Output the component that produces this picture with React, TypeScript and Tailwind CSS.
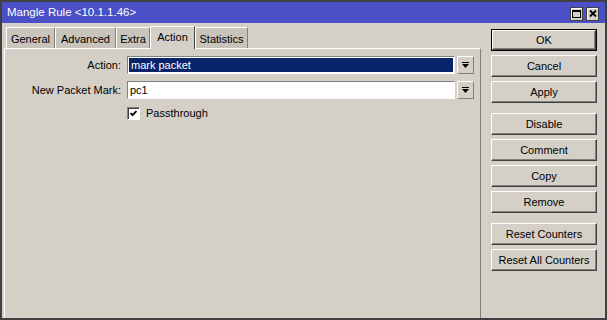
import React from 'react'

const tabs = [
  { label: 'General', w: 'w-[49px]' },
  { label: 'Advanced', w: 'w-[61px]' },
  { label: 'Extra', w: 'w-[34px]' },
  { label: 'Action', w: 'w-[45px]', active: true },
  { label: 'Statistics', w: 'w-[53px]' },
]

function Btn({ label, primary }: { label: string; primary?: boolean }) {
  if (primary) {
    return (
      <div className="w-[106px] h-[22px] border border-black">
        <div className="w-full h-full flex items-center justify-center bg-[#d4d0c8] border-t border-l border-white border-r border-b border-r-[#404040] border-b-[#404040] shadow-[inset_-1px_-1px_0_#808080]">
          {label}
        </div>
      </div>
    )
  }
  return (
    <div className="w-[106px] h-[22px] flex items-center justify-center bg-[#d4d0c8] border-t border-l border-white border-r border-b border-r-[#404040] border-b-[#404040] shadow-[inset_-1px_-1px_0_#808080]">
      {label}
    </div>
  )
}

function DropArrow() {
  return (
    <div className="ml-[2px] w-[17px] h-[18px] flex items-center justify-center bg-[#d4d0c8] border-t border-l border-white border-r border-b border-r-[#808080] border-b-[#808080]">
      <svg width="7" height="7" viewBox="0 0 7 7">
        <rect x="0" y="0" width="7" height="1" fill="#000" />
        <polygon points="0,2 7,2 3.5,6" fill="#000" />
      </svg>
    </div>
  )
}

export default function App() {
  return (
    <div className="w-[607px] h-[320px] overflow-hidden bg-[#404040] p-[2px] flex flex-col font-['Liberation_Sans',Arial,sans-serif] text-[11px] text-black leading-none">
      {/* Title bar */}
      <div className="h-[21px] shrink-0 bg-[#4b4fc8] flex items-center pl-[5px] pr-[6px] text-white">
        <span className="flex-1 text-[11.5px] mt-[1px]">Mangle Rule &lt;10.1.1.46&gt;</span>
        <div className="flex gap-[3px] mt-[2px]">
          <div className="w-[13px] h-[14px] flex items-center justify-center bg-[#d4d0c8] border border-[#404040] shadow-[inset_1px_1px_0_#fff]">
            <svg width="9" height="8" viewBox="0 0 9 8">
              <rect x="0.5" y="0.5" width="8" height="7" fill="none" stroke="#000" />
              <rect x="0" y="0" width="9" height="2" fill="#000" />
            </svg>
          </div>
          <div className="w-[13px] h-[14px] flex items-center justify-center bg-[#d4d0c8] border border-[#404040] shadow-[inset_1px_1px_0_#fff]">
            <svg width="8" height="7" viewBox="0 0 8 7">
              <path d="M1 0.5 L7 6.5 M7 0.5 L1 6.5" stroke="#000" strokeWidth="1.8" />
            </svg>
          </div>
        </div>
      </div>

      {/* Body */}
      <div className="flex-1 flex bg-[#d4d0c8]">
        <div className="w-[479px] shrink-0 flex flex-col pl-[2px] pt-[3px]">
          <div className="flex items-end h-[22px] pl-[2px]">
            {tabs.map((t) =>
              t.active ? (
                <div
                  key={t.label}
                  className={`${t.w} h-[23px] -mb-px relative z-10 flex items-center justify-center pb-[2px] bg-[#d4d0c8] border-t border-l border-white border-r border-r-[#404040]`}
                >
                  {t.label}
                </div>
              ) : (
                <div
                  key={t.label}
                  className={`${t.w} h-[21px] flex items-center justify-center pt-[2px] bg-[#c8c4bc] border-t border-l border-white border-r border-r-[#808080]`}
                >
                  {t.label}
                </div>
              )
            )}
          </div>
          <div className="flex-1 border-t border-l border-white border-r border-r-[#808080] pt-[7px]">
            <div className="flex items-center h-[18px]">
              <div className="w-[116px] text-right">Action:</div>
              <div className="ml-[6px] w-[328px] h-[18px] border-t border-l border-[#808080] border-r border-b border-r-white border-b-white bg-white p-px">
                <div className="w-full h-full bg-[#0a246a] text-white flex items-center pl-[2px]">mark packet</div>
              </div>
              <DropArrow />
            </div>
            <div className="flex items-center h-[18px] mt-[7px]">
              <div className="w-[116px] text-right">New Packet Mark:</div>
              <div className="ml-[6px] w-[328px] h-[18px] border-t border-l border-[#808080] border-r border-b border-r-white border-b-white bg-white flex items-center pl-[2px]">
                pc1
              </div>
              <DropArrow />
            </div>
            <div className="flex items-center mt-[8px] ml-[122px]">
              <div className="w-[13px] h-[13px] flex items-center justify-center bg-white border-t border-l border-[#808080] border-r border-b border-r-white border-b-white shadow-[inset_1px_1px_0_#404040]">
                <svg width="7" height="7" viewBox="0 0 7 7">
                  <path d="M0.5 3 L2.5 5.2 L6.5 1" fill="none" stroke="#000" strokeWidth="1.8" />
                </svg>
              </div>
              <span className="ml-[6px]">Passthrough</span>
            </div>
          </div>
        </div>

        <div className="flex-1 flex flex-col pl-[10px] pt-[6px]">
          <div className="flex flex-col gap-[4px]">
            <Btn label="OK" primary />
            <Btn label="Cancel" />
            <Btn label="Apply" />
          </div>
          <div className="flex flex-col gap-[4px] mt-[10px]">
            <Btn label="Disable" />
            <Btn label="Comment" />
            <Btn label="Copy" />
            <Btn label="Remove" />
          </div>
          <div className="flex flex-col gap-[4px] mt-[10px]">
            <Btn label="Reset Counters" />
            <Btn label="Reset All Counters" />
          </div>
        </div>
      </div>
    </div>
  )
}
